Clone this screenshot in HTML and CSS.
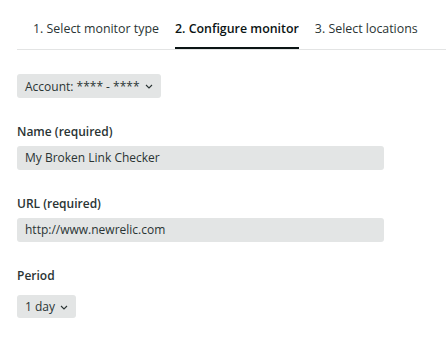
FILE: index.html
```html
<!DOCTYPE html>
<html>
<head>
<meta charset="utf-8">
<link rel="stylesheet" href="styles.css">
</head>
<body>
<div class="page">
  <nav class="tabs">
    <div class="tab">1. Select monitor type</div>
    <div class="tab active">2. Configure monitor</div>
    <div class="tab">3. Select locations</div>
  </nav>
  <div class="form">
    <button class="select">Account: **** - ****<svg class="chev" viewBox="0 0 8 5" width="8" height="5"><path d="M1 1l3 3 3-3" fill="none" stroke="currentColor" stroke-width="1.1"/></svg></button>
    <div class="field">
      <label class="label">Name (required)</label>
      <div class="input">My Broken Link Checker</div>
    </div>
    <div class="field">
      <label class="label">URL (required)</label>
      <div class="input">http://www.newrelic.com</div>
    </div>
    <div class="field">
      <label class="label">Period</label>
      <button class="select period">1 day<svg class="chev" viewBox="0 0 8 5" width="8" height="5"><path d="M1 1l3 3 3-3" fill="none" stroke="currentColor" stroke-width="1.1"/></svg></button>
    </div>
  </div>
</div>
</body>
</html>
```
FILE: styles.css
```css
* { box-sizing: border-box; }
body {
  margin: 0;
  background: #fff;
  font-family: "Open Sans", "Liberation Sans", sans-serif;
  color: #2a3434;
}
.page {
  padding: 0 0 0 17px;
}
.tabs {
  display: flex;
  gap: 16px;
  padding: 20px 0 0 16px;
  border-bottom: 1px solid #e3e4e4;
}
.tab {
  font-size: 12.4px;
  line-height: 17px;
  padding-bottom: 10px;
  border-bottom: 2px solid transparent;
  white-space: nowrap;
}
.tab.active {
  font-weight: 600;
  color: #0b1414;
  border-bottom-color: #0b1414;
}
.form {
  display: flex;
  flex-direction: column;
  align-items: flex-start;
  padding-top: 24px;
  gap: 26px;
}
.select {
  display: inline-flex;
  align-items: center;
  gap: 5px;
  height: 24px;
  padding: 0 8px;
  border: none;
  border-radius: 3px;
  background: #e3e5e5;
  font-family: inherit;
  font-size: 12px;
  color: #2a3434;
}
.select.period { margin-top: 5px; height: 23px; }
.chev { color: #2a3434; margin-top: 1px; }
.field {
  display: flex;
  flex-direction: column;
  align-items: flex-start;
  gap: 6px;
  width: 367px;
}
.label {
  font-size: 12px;
  line-height: 16px;
  font-weight: 600;
  color: #2a3434;
}
.input {
  width: 100%;
  height: 24px;
  line-height: 24px;
  padding: 0 8px;
  background: #e3e5e5;
  border-radius: 3px;
  font-size: 12px;
  color: #2a3434;
}
```
